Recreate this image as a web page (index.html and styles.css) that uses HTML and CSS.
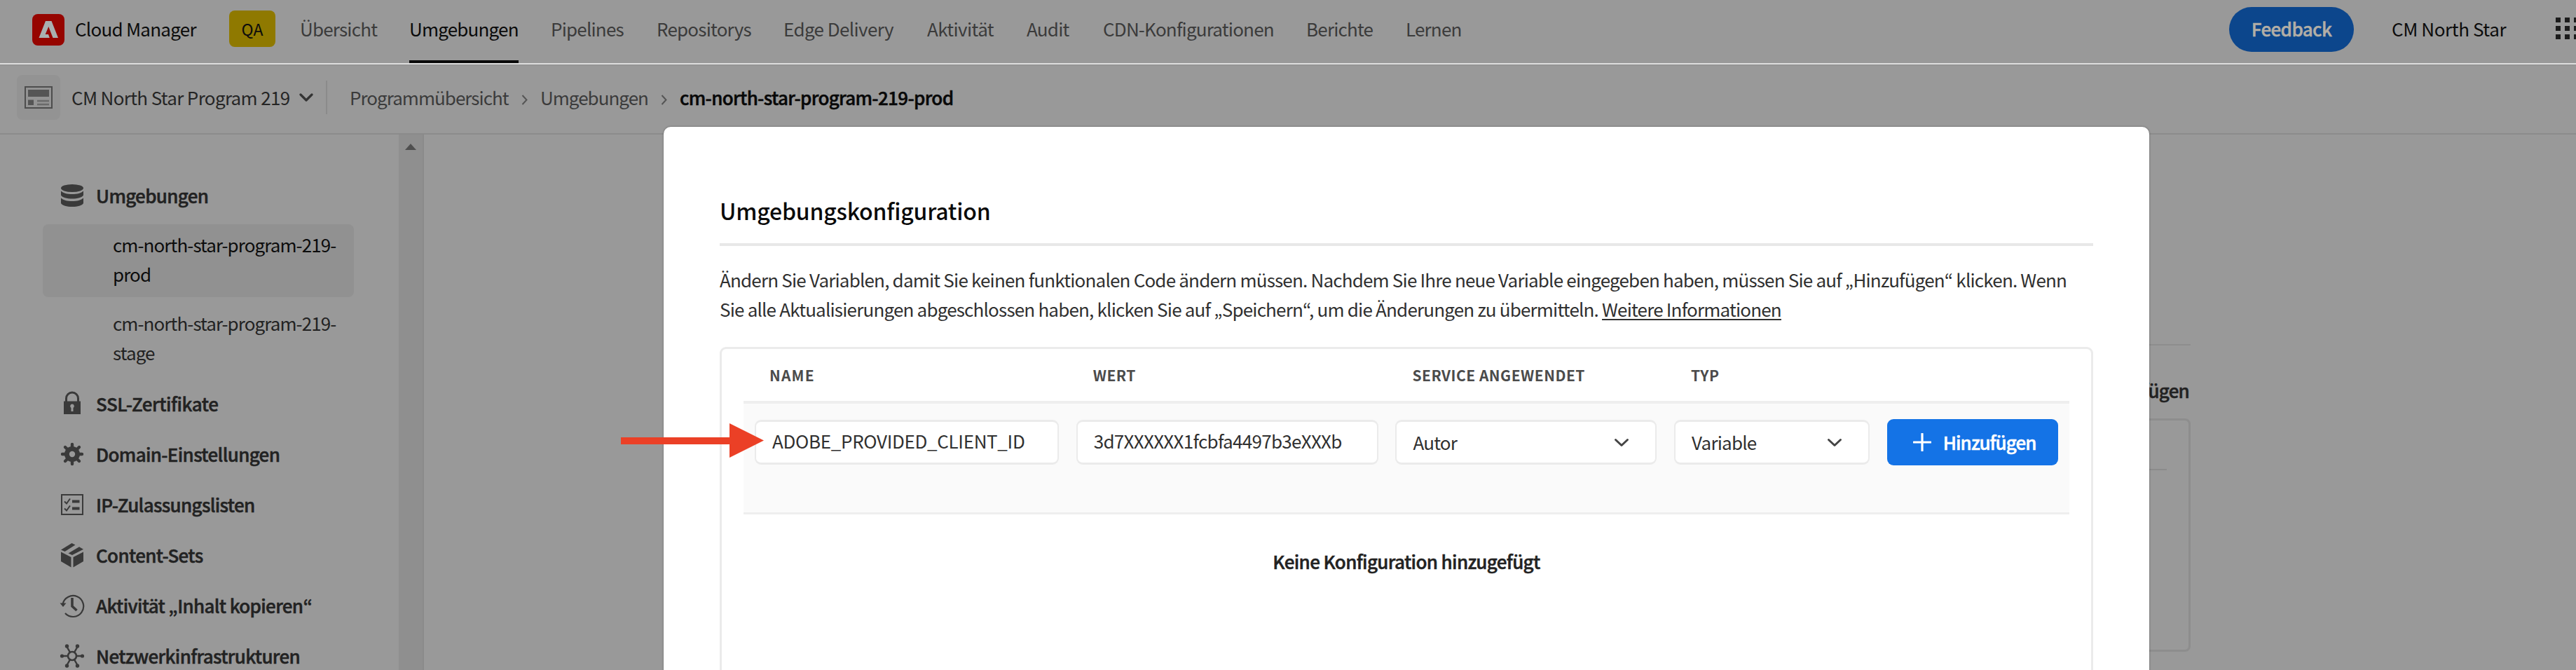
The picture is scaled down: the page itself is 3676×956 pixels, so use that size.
FILE: index.html
```html
<!DOCTYPE html>
<html lang="de">
<head>
<meta charset="utf-8">
<title>Cloud Manager</title>
<link rel="stylesheet" href="styles.css">
</head>
<body>
<div class="app">
  <header class="topbar">
    <svg class="logo" viewBox="0 0 46 45"><rect width="46" height="45" rx="8" fill="#960500"/><path d="M9.500 34 19 10h8.500l9.500 24h-7.500L23.300 18l-4.600 11h4.300l1.800 5z" fill="#a9b0b0"/></svg>
    <span class="product">Cloud Manager</span>
    <span class="badge">QA</span>
    <nav class="tabs">
      <a>Übersicht</a><a class="active">Umgebungen</a><a>Pipelines</a><a>Repositorys</a><a class="wide">Edge Delivery</a><a class="wide">Aktivität</a><a>Audit</a><a>CDN-Konfigurationen</a><a>Berichte</a><a>Lernen</a>
    </nav>
    <span class="feedback">Feedback</span>
    <span class="org">CM North Star</span>
    <svg class="grid-icon" viewBox="0 0 33 32" fill="#1c1c1c"><path d="M0 0h7v7H0zM13 0h7v7h-7zM26 0h7v7h-7zM0 12h7v7H0zM13 12h7v7h-7zM26 12h7v7h-7zM0 24h7v7H0zM13 24h7v7h-7zM26 24h7v7h-7z"/></svg>
  </header>

  <div class="crumbs">
    <span class="program-icon"><svg viewBox="0 0 40 32"><rect x="1" y="1" width="38" height="30" fill="none" stroke="#4d4d4d" stroke-width="2"/><path d="M5 5h30v10H5z" fill="#555"/><path d="M5 19.500h8v7.500H5z" fill="#555"/><path d="M18 21h17M18 26h17" stroke="#6a6a6a" stroke-width="2.400"/></svg></span>
    <span class="program">CM North Star Program 219</span>
    <svg class="program-chevron" viewBox="0 0 20 12"><path d="M2 2l8 8 8-8" fill="none" stroke="#333" stroke-width="3.200" stroke-linecap="round" stroke-linejoin="round"/></svg>
    <span class="divider"></span>
    <span class="crumb first">Programmübersicht</span>
    <svg class="sep" viewBox="0 0 9 15"><path d="M1.500 1l6 6.500-6 6.500" fill="none" stroke="#555" stroke-width="2"/></svg>
    <span class="crumb">Umgebungen</span>
    <svg class="sep" viewBox="0 0 9 15"><path d="M1.500 1l6 6.500-6 6.500" fill="none" stroke="#555" stroke-width="2"/></svg>
    <span class="crumb current">cm-north-star-program-219-prod</span>
  </div>

  <div class="body">
    <aside class="sidebar">
      <div class="item"><svg viewBox="0 0 36 36" fill="#3a3a3a"><ellipse cx="18" cy="7.500" rx="16" ry="5.500"/><path d="M2 11.500c3 3.200 9 4.600 16 4.600s13-1.400 16-4.600v6c-2 3.300-8 5-16 5s-14-1.700-16-5z"/><path d="M2 21.500c3 3.200 9 4.600 16 4.600s13-1.400 16-4.600v7.500c-2 3.500-8 5-16 5s-14-1.500-16-5z"/></svg><span>Umgebungen</span></div>
      <div class="child selected">cm-north-star-program-219-<br>prod</div>
      <div class="child last">cm-north-star-program-219-<br>stage</div>
      <div class="item"><svg viewBox="0 0 36 36"><path d="M9.500 16v-5.500a8.500 8.500 0 0 1 17 0V16" fill="none" stroke="#3a3a3a" stroke-width="3"/><path d="M6 14.500h24V33H6z" fill="#3a3a3a"/><path d="M18 18.500a3 3 0 0 1 1.500 5.500v5h-3v-5a3 3 0 0 1 1.500-5.500z" fill="#999"/></svg><span class="loose">SSL-Zertifikate</span></div>
      <div class="item"><svg viewBox="0 0 36 36"><path d="M18 4v28M4 18h28M8 8l20 20M28 8L8 28" stroke="#3a3a3a" stroke-width="4.400" stroke-linecap="round"/><circle cx="18" cy="18" r="11" fill="#3a3a3a"/><circle cx="18" cy="18" r="4.200" fill="#999"/></svg><span>Domain-Einstellungen</span></div>
      <div class="item"><svg viewBox="0 0 36 36" fill="none" stroke="#3a3a3a"><path d="M3 4h30v28H3z" stroke-width="2"/><path d="M7 13.500l3 3 5-7M7 23.500l3 3 5-7" stroke-width="2"/><path d="M18 13.500h10.500M18 23.500h10.500" stroke-width="4"/></svg><span>IP-Zulassungslisten</span></div>
      <div class="item"><svg viewBox="0 0 36 36" fill="#3a3a3a"><path d="M2 10.500L17.500 1l5 2.500L7.500 13zM12.500 15.500L28 6.200l6 3.500L18 18zM2 13.500l14.500 7.500V35.500L2 27zM34 13.500L19.500 21V35.500L34 27z"/></svg><span>Content-Sets</span></div>
      <div class="item"><svg viewBox="0 0 36 36" fill="none" stroke="#3a3a3a"><path d="M4.500 16A15 15 0 1 1 8 29" stroke-width="2.200"/><path d="M18 7v12l6.500 6" stroke-width="3.600"/><path d="M.5 14.500h9L5 20z" fill="#3a3a3a" stroke="none"/></svg><span>Aktivität „Inhalt kopieren“</span></div>
      <div class="item"><svg viewBox="0 0 36 36" fill="none" stroke="#3a3a3a"><circle cx="18" cy="18" r="6" stroke-width="2.600"/><path d="M3 18h9M24 18h9M15 12.800L10.500 5M21 12.800L25.500 5M15 23.200L10.500 31M21 23.200L25.500 31" stroke-width="2.400"/><g fill="#3a3a3a" stroke="none"><circle cx="3.500" cy="18" r="2.600"/><circle cx="32.500" cy="18" r="2.600"/><circle cx="10.500" cy="4" r="2.700"/><circle cx="25.500" cy="4" r="2.700"/><circle cx="10.500" cy="32" r="2.700"/><circle cx="25.500" cy="32" r="2.700"/></g></svg><span>Netzwerkinfrastrukturen</span></div>
    </aside>
    <div class="scrollbar"><svg viewBox="0 0 16 9"><path d="M0 9L8 0l8 9z" fill="#4f4f4f"/></svg></div>
    <main class="content">
      <div class="section-head">Hinzufügen</div>
      <div class="card"><div class="card-rule"></div></div>
    </main>
  </div>
</div>

<section class="dialog">
  <h2>Umgebungskonfiguration</h2>
  <p class="intro">Ändern Sie Variablen, damit Sie keinen funktionalen Code ändern müssen. Nachdem Sie Ihre neue Variable eingegeben haben, müssen Sie auf „Hinzufügen“ klicken. Wenn<br>Sie alle Aktualisierungen abgeschlossen haben, klicken Sie auf „Speichern“, um die Änderungen zu übermitteln. <a>Weitere Informationen</a></p>
  <div class="panel">
    <div class="cols head"><span>NAME</span><span>WERT</span><span>SERVICE ANGEWENDET</span><span>TYP</span></div>
    <div class="cols row">
      <div class="field name">ADOBE_PROVIDED_CLIENT_ID</div>
      <div class="field value">3d7XXXXXX1fcbfa4497b3eXXXb</div>
      <div class="field select"><span>Autor</span><svg viewBox="0 0 22 13"><path d="M2.500 2.500l8.500 8 8.500-8" fill="none" stroke="#444" stroke-width="3" stroke-linecap="round" stroke-linejoin="round"/></svg></div>
      <div class="field select"><span>Variable</span><svg viewBox="0 0 22 13"><path d="M2.500 2.500l8.500 8 8.500-8" fill="none" stroke="#444" stroke-width="3" stroke-linecap="round" stroke-linejoin="round"/></svg></div>
      <div class="add"><svg viewBox="0 0 26 26"><path d="M13 1v24M1 13h24" stroke="#fff" stroke-width="3.200" stroke-linecap="round"/></svg><span>Hinzufügen</span></div>
    </div>
    <div class="empty">Keine Konfiguration hinzugefügt</div>
  </div>
</section>

<svg class="arrow" viewBox="0 0 204 49"><path d="M0 20h155V0l49 24.500L155 49V30H0z" fill="#eb4026"/></svg>
</body>
</html>
```
FILE: styles.css
```css
* { box-sizing: border-box; }

body {
  margin: 0;
  width: 3676px;
  height: 956px;
  overflow: hidden;
  position: relative;
  background: #999;
  color: #222;
  font-family: "Noto Sans CJK KR", "Noto Sans", sans-serif;
  font-size: 26px;
  letter-spacing: -0.8px;
  line-height: 42px;
  white-space: nowrap;
}

svg { display: block; flex: none; }

.app {
  height: 956px;
  display: flex;
  flex-direction: column;
  overflow: hidden;
}

/* Semibold look, between the medium and bold cuts */
.feedback, .item, .current, .add, .empty, .section-head {
  font-weight: 500;
  -webkit-text-stroke: 0.5px currentColor;
}

/* Top bar */
.topbar {
  flex: none;
  height: 92px;
  display: flex;
  align-items: center;
  padding: 0 0 8px 46px;
  border-bottom: 2px solid #dcdcdc;
  color: #0c0c0c;
}
.logo { width: 46px; height: 45px; margin-top: 2px; }
.product { flex: none; width: 220px; margin-left: 15px; letter-spacing: -0.75px; }
.badge {
  flex: none;
  width: 66px;
  height: 52px;
  border-radius: 8px;
  background: #8f7900;
  font-size: 23px;
  line-height: 52px;
  text-align: center;
  letter-spacing: 0;
}
.tabs {
  flex: none;
  width: 2753px;
  margin-left: 35px;
  display: grid;
  grid-template-columns: 156px 202px 151px 181px 205px 142px 109px 290px 142px 1fr;
  justify-items: start;
  color: #3b3b3b;
}
.tabs a { height: 82px; line-height: 82px; margin-bottom: -8px; }
.tabs .active { color: #0a0a0a; border-bottom: 4px solid #0a0a0a; height: 90px; }
.tabs .wide { letter-spacing: -0.6px; }
.feedback {
  flex: none;
  width: 178px;
  height: 64px;
  margin-top: 1px;
  border-radius: 32px;
  background: #0c468c;
  color: #b3aea6;
  line-height: 61px;
  text-align: center;
  letter-spacing: -0.6px;
}
.org { flex: none; width: 234px; margin-left: 54px; letter-spacing: -0.4px; }
.grid-icon { width: 33px; height: 32px; }

/* Breadcrumb bar */
.crumbs {
  flex: none;
  height: 100px;
  display: flex;
  align-items: center;
  padding: 0 0 6px 24px;
  border-top: 2px solid #949494;
  border-bottom: 2px solid #8b8b8b;
  color: #3b3b3b;
}
.program-icon {
  width: 62px;
  height: 64px;
  border-radius: 8px;
  background: #939393;
  display: flex;
  align-items: center;
  padding-left: 11px;
}
.program-icon svg { width: 40px; height: 32px; }
.program { width: 325px; margin-left: 16px; color: #252525; letter-spacing: -0.66px; }
.program-chevron { width: 20px; height: 12px; }
.divider { width: 2px; height: 48px; margin: 0 33px 0 18px; background: #8b8b8b; }
.crumb { letter-spacing: -0.98px; }
.crumb.first { width: 246px; margin-left: -1px; }
.sep { width: 9px; height: 15px; margin: 6px 18px 0 -1px; }
.sep + .crumb { width: 173px; }
.sep + .current { width: auto; color: #080808; letter-spacing: -0.68px; }

/* Body */
.body { flex: 1; display: flex; min-height: 0; }
.sidebar { width: 569px; padding: 51px 0 0 61px; }
.item {
  height: 72px;
  display: flex;
  align-items: center;
  padding-left: 24px;
  color: #222;
  letter-spacing: -0.68px;
}
.item svg { width: 36px; height: 36px; margin-right: 16px; }
.item .loose { letter-spacing: -0.47px; }
.child {
  width: 444px;
  height: 104px;
  margin-bottom: 8px;
  padding: 8px 0 0 100px;
  border-radius: 8px;
  letter-spacing: -0.92px;
}
.child.selected { background: #919191; color: #0c0c0c; margin-top: 5px; }
.child.last { margin-bottom: 4px; }
.scrollbar {
  width: 36px;
  background: #8f8f8f;
  border-right: 2px solid #8a8a8a;
  padding: 13px 0 0 9px;
}
.scrollbar svg { width: 16px; height: 9px; }
.content { width: 1726px; margin-left: 795px; padding-top: 299px; }
.section-head {
  height: 106px;
  border-top: 2px solid #8d8d8d;
  padding-right: 2px;
  line-height: 127px;
  text-align: right;
}
.card { height: 333px; border: 3px solid #8d8d8d; border-radius: 8px; padding: 69px 31px 0; }
.card-rule { height: 2px; background: #8b8b8b; }

/* Dialog */
.dialog {
  position: absolute;
  left: 947px;
  top: 181px;
  width: 2120px;
  height: 790px;
  padding: 79px 80px 0;
  border-radius: 10px;
  background: #fff;
  box-shadow: 0 0 3px rgba(0, 0, 0, 0.35);
}
.dialog h2 {
  margin: 0;
  padding-bottom: 7px;
  border-bottom: 4px solid #e8e8e8;
  color: #0a0a0a;
  font-size: 32px;
  font-weight: 500;
  line-height: 80px;
  letter-spacing: -0.2px;
}
.intro { margin: 27px 0 33px; color: #303030; letter-spacing: -0.81px; }
.intro a { text-decoration: underline; text-decoration-thickness: 2px; text-underline-offset: 3px; }
.panel {
  height: 480px;
  border: 3px solid #ebebeb;
  border-radius: 9px;
  padding: 0 31px;
}
.cols {
  display: grid;
  grid-template-columns: 434px 431px 373px 279px 244px;
  column-gap: 24.700px;
  padding-left: 16px;
}
.head {
  height: 74px;
  align-items: center;
  color: #4b4b4b;
  font-size: 21px;
  font-weight: 700;
  letter-spacing: 0.5px;
}
.head span { padding-left: 24px; }
.head span:first-child { padding-left: 21px; letter-spacing: 1.2px; }
.row {
  height: 162px;
  padding-top: 23px;
  border-top: 4px solid #eee;
  border-bottom: 3px solid #eee;
  background: #fafafa;
}
.field {
  height: 64px;
  display: flex;
  align-items: center;
  padding: 0 37px 0 23px;
  border: 2px solid #ebebeb;
  border-top-width: 3px;
  border-bottom-width: 3px;
  border-radius: 9px;
  background: #fff;
  color: #303030;
}
.name { letter-spacing: -0.32px; padding-bottom: 4px; }
.value { letter-spacing: -0.7px; padding-bottom: 4px; }
.select { justify-content: space-between; }
.select svg { width: 22px; height: 13px; }
.add {
  height: 66px;
  margin-top: -1px;
  display: flex;
  align-items: center;
  gap: 17px;
  padding-left: 37px;
  border-radius: 9px;
  background: #1473e6;
  color: #fff;
  letter-spacing: -0.95px;
}
.add svg { width: 26px; height: 26px; }
.empty {
  margin-top: 47px;
  color: #222;
  line-height: 40px;
  text-align: center;
  letter-spacing: -0.64px;
}

/* Callout arrow */
.arrow { position: absolute; left: 886px; top: 604px; width: 204px; height: 49px; }
```
